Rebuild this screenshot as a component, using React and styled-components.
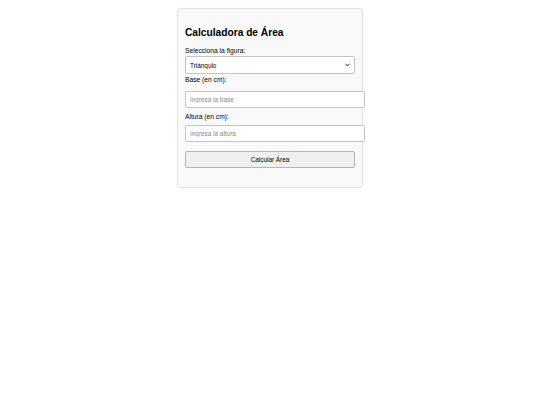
import React, { useState } from "react";
import styled, { createGlobalStyle } from "styled-components";

const GlobalStyle = createGlobalStyle`
  body {
    margin: 0;
    background: #ffffff;
    font-family: "Liberation Sans", Arial, sans-serif;
    color: #000;
  }
`;

const Page = styled.div`
  padding-top: 8px;
  display: flex;
  justify-content: center;
`;

const Card = styled.div`
  width: 186px;
  box-sizing: border-box;
  background: #f9f9f9;
  border: 1px solid #e2e2e2;
  border-radius: 4px;
  padding: 11px 7px 8px;
  box-shadow: 0 0 2px rgba(0, 0, 0, 0.06);
`;

const Title = styled.h2`
  margin: 7px 0 8px;
  font-size: 10.2px;
  line-height: 11.5px;
  font-weight: bold;
`;

const Label = styled.label`
  display: block;
  font-size: 6.7px;
  line-height: 7.7px;
  margin: ${(p) => p.$mt || 0}px 0 ${(p) => p.$mb || 0}px;
`;

const SelectWrap = styled.div`
  position: relative;
  width: 170px;
`;

const Select = styled.select`
  appearance: none;
  display: block;
  width: 100%;
  height: 18px;
  box-sizing: border-box;
  padding: 0 4px;
  font-family: inherit;
  font-size: 6.4px;
  color: #000;
  background: #fff;
  border: 1px solid #c4c4c4;
  border-radius: 2px;
  outline: none;
`;

const Chevron = styled.svg`
  position: absolute;
  right: 5px;
  top: 7px;
  width: 5px;
  height: 4px;
  pointer-events: none;
`;

const Input = styled.input`
  display: block;
  width: 180px;
  height: 17px;
  box-sizing: border-box;
  padding: 0 4px;
  font-family: inherit;
  font-size: 6.4px;
  color: #000;
  background: #fff;
  border: 1px solid #c4c4c4;
  border-radius: 2px;
  outline: none;
  &::placeholder {
    color: #8a8a8a;
  }
`;

const Button = styled.button`
  display: block;
  width: 170px;
  height: 17px;
  margin: 9px 0 11px;
  font-family: inherit;
  font-size: 6.4px;
  color: #000;
  background: #efefef;
  border: 1px solid #b5b5b5;
  border-radius: 2px;
  cursor: pointer;
`;

export default function App() {
  const [figura, setFigura] = useState("triangulo");

  return (
    <Page>
      <GlobalStyle />
      <Card>
        <Title>Calculadora de Área</Title>
        <Label $mb={2}>Selecciona la figura:</Label>
        <SelectWrap>
          <Select value={figura} onChange={(e) => setFigura(e.target.value)}>
            <option value="triangulo">Triángulo</option>
            <option value="rectangulo">Rectángulo</option>
            <option value="circulo">Círculo</option>
          </Select>
          <Chevron viewBox="0 0 10 8">
            <path d="M1 1.5 L5 6 L9 1.5" fill="none" stroke="#333" strokeWidth="2" />
          </Chevron>
        </SelectWrap>
        <Label $mt={2} $mb={7}>Base (en cm):</Label>
        <Input type="number" placeholder="Ingresa la base" />
        <Label $mt={5} $mb={4}>Altura (en cm):</Label>
        <Input type="number" placeholder="Ingresa la altura" />
        <Button>Calcular Área</Button>
      </Card>
    </Page>
  );
}
